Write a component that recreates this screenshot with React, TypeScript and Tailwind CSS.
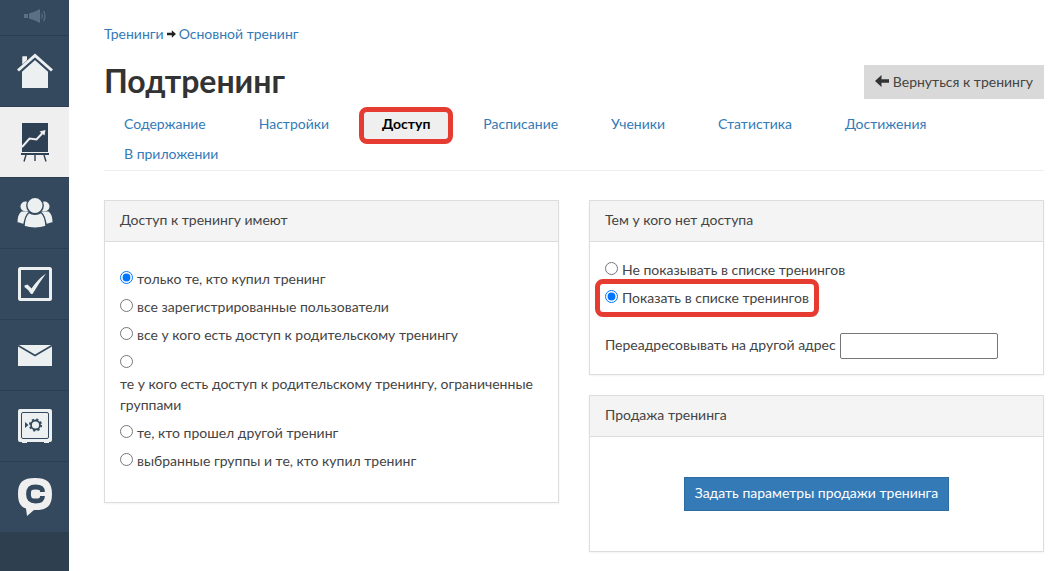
import type { ReactNode } from "react";

function MegaphoneIcon() {
  return (
    <svg width="22" height="16" viewBox="0 0 22 16" className="fill-[#5b7085]">
      <rect x="0" y="6" width="4" height="4" />
      <path d="M5 5.500 L11 3.500 L16 1 V15 L11 12.500 L5 10.500 Z" />
      <path d="M17.500 5.500 Q19 8 17.500 10.500 M19.500 3 Q22.500 8 19.500 13" className="fill-none stroke-[#5b7085]" strokeWidth="1.200" />
    </svg>
  );
}

function HomeIcon() {
  return (
    <svg width="36" height="36" viewBox="0 0 36 36" className="fill-[#ecf0f1]">
      <path d="M5.500 3.500 H10 V7 L5.500 11.500 Z" />
      <path d="M18 6 L31 18.500 V35 H5 V18.500 Z" />
      <path d="M1 18.500 L18 3.500 L35 18.500" className="fill-none stroke-[#34495e]" strokeWidth="5.600" />
      <path d="M5.500 3.500 H10 V7 L5.500 11.500 Z" />
      <path d="M1 17.500 L18 2.500 L35 17.500" className="fill-none stroke-[#ecf0f1]" strokeWidth="3" />
    </svg>
  );
}

function BoardIcon() {
  return (
    <svg width="28" height="40" viewBox="0 0 28 40">
      <path d="M1 1 H27 V30 H1 Z" className="fill-[#2e4154]" />
      <path d="M0 31 H28 V33 H0 Z" className="fill-[#2e4154]" />
      <path d="M5 33 L3 39.500 M14 33 V39 M23 33 L25 39.500" className="fill-none stroke-[#2e4154]" strokeWidth="1.400" />
      <path d="M1 25 L8.500 16.500 L15.500 17.500 L21.500 11" className="fill-none stroke-[#efefef]" strokeWidth="2" />
      <path d="M24.500 8 L23.500 13.500 L18.500 9.500 Z" className="fill-[#efefef]" />
    </svg>
  );
}

function UsersIcon() {
  return (
    <svg width="36" height="32" viewBox="0 0 36 32" className="fill-[#ecf0f1]">
      <circle cx="8.500" cy="9.500" r="5" />
      <circle cx="27.500" cy="9.500" r="5" />
      <path d="M0.500 26 Q0.500 17 4.500 14.500 H12 V27 Q6 27.500 0.500 25 Z M35.500 26 Q35.500 17 31.500 14.500 H24 V27 Q30 27.500 35.500 25 Z" />
      <path
        d="M12 15.500 Q14.500 17.300 18 17.300 Q21.500 17.300 24 15.500 Q28.500 19 29 29.500 Q18 33 7 29.500 Q7.500 19 12 15.500 Z"
        className="stroke-[#34495e]"
        strokeWidth="1.400"
      />
      <circle cx="18" cy="8.500" r="8.200" className="stroke-[#34495e]" strokeWidth="1.400" />
    </svg>
  );
}

function CheckIcon() {
  return (
    <svg width="34" height="34" viewBox="0 0 34 34">
      <rect x="1.500" y="1.500" width="31" height="31" rx="1" className="fill-none stroke-[#ecf0f1]" strokeWidth="3" />
      <path d="M6.500 18.500 L9.500 17.500 L13.500 21.500 Q20 12 28 6.500 Q21 16 14.500 27 H13 Q10.500 22.500 6.500 20 Z" className="fill-[#ecf0f1]" />
    </svg>
  );
}

function MailIcon() {
  return (
    <svg width="34" height="21" viewBox="0 0 34 21">
      <path d="M0 0 H34 V21 H0 Z" className="fill-[#ecf0f1]" />
      <path d="M0 0.500 L17 10.500 L34 0.500" className="fill-none stroke-[#34495e]" strokeWidth="1.700" />
    </svg>
  );
}

function SafeIcon() {
  return (
    <svg width="34" height="34" viewBox="0 0 34 34">
      <path d="M2 0 H32 Q34 0 34 2 V31 Q34 33 32 33 H31 V34 H26 V33 H9 V34 H4 V33 H2 Q0 33 0 31 V2 Q0 0 2 0 Z" className="fill-[#ecf0f1]" />
      <rect x="3.500" y="3.500" width="27" height="26" rx="1.500" className="fill-none stroke-[#34495e]" />
      <path d="M7 13 L10.500 16 L7 19 Z" className="fill-[#34495e]" />
      <circle cx="17.500" cy="16" r="4.500" className="fill-none stroke-[#34495e]" strokeWidth="1.800" />
      <circle cx="17.500" cy="16" r="5.700" className="fill-none stroke-[#34495e]" strokeWidth="1.800" strokeDasharray="2.200 2.277" />
    </svg>
  );
}

function ChatIcon() {
  return (
    <svg width="34" height="38" viewBox="0 0 34 38">
      <path d="M17 0 C29 0 34 4 34 16 C34 28 29 32 18 32 H16 L9 38 L8 30.500 C2.500 29 0 24 0 16 C0 4 5 0 17 0 Z" className="fill-[#efefef]" />
      <path d="M24.500 14 C24.500 9.500 21.500 9 17.500 9 C12 9 10.500 11 10.500 16 C10.500 21 12 23 17.500 23 C21.500 23 24.500 22.500 24.500 18" className="fill-none stroke-[#34495e]" strokeWidth="4.800" />
    </svg>
  );
}

function ArrowIcon({ className }: { className: string }) {
  return (
    <svg viewBox="0 0 14 12" className={className} fill="currentColor">
      <path d="M0 6 L6.500 0 V4.200 H14 V7.800 H6.500 V12 Z" />
    </svg>
  );
}

const menu: { label: string; icon: ReactNode; active?: boolean }[] = [
  { label: "Главная", icon: <HomeIcon /> },
  { label: "Тренинги", icon: <BoardIcon />, active: true },
  { label: "Пользователи", icon: <UsersIcon /> },
  { label: "Задачи", icon: <CheckIcon /> },
  { label: "Сообщения", icon: <MailIcon /> },
  { label: "Продажи", icon: <SafeIcon /> },
  { label: "Чат", icon: <ChatIcon /> },
];

const tabs = ["Содержание", "Настройки", "Доступ", "Расписание", "Ученики", "Статистика", "Достижения", "В приложении"];

const accessOptions = [
  "только те, кто купил тренинг",
  "все зарегистрированные пользователи",
  "все у кого есть доступ к родительскому тренингу",
  "те у кого есть доступ к родительскому тренингу, ограниченные группами",
  "те, кто прошел другой тренинг",
  "выбранные группы и те, кто купил тренинг",
];

function Panel({ title, children }: { title: string; children: ReactNode }) {
  return (
    <section className="border border-[#dddddd] bg-white shadow-xs">
      <h2 className="border-b border-[#dddddd] bg-[#f4f4f4] px-[15px] pt-[9px] pb-[11px] leading-5">{title}</h2>
      {children}
    </section>
  );
}

function RadioRow({ name, label, checked, stacked }: { name: string; label: string; checked?: boolean; stacked?: boolean }) {
  return (
    <label className={stacked ? "flex flex-col items-start" : "flex items-start gap-1"}>
      <span className="flex h-[21px] items-start pt-[3px]">
        <input type="radio" name={name} defaultChecked={checked} className="size-[13px] shrink-0" />
      </span>
      <span>{label}</span>
    </label>
  );
}

export default function App() {
  return (
    <div className="flex min-h-screen bg-white font-['Lato','Open_Sans',sans-serif] text-[14px] leading-[21px] text-[#444444]">
      <nav aria-label="Главное меню" className="w-[69px] shrink-0 bg-[#2e3f50]">
        <a href="#news" aria-label="Новости" className="flex h-9 items-center justify-center border-b border-[#2c3e50] bg-[#34495e] pb-[3px]">
          <MegaphoneIcon />
        </a>
        {menu.map((item) => (
          <a
            key={item.label}
            href="#menu"
            aria-label={item.label}
            className={
              item.active
                ? "flex h-[71px] items-center justify-center border-b border-[#2c3e50] bg-[#efefef]"
                : "flex h-[71px] items-center justify-center border-b border-[#2c3e50] bg-[#34495e]"
            }
          >
            {item.icon}
          </a>
        ))}
      </nav>

      <main className="min-w-0 flex-1 pt-[23px] pr-[17px] pl-[35px]">
        <nav aria-label="Навигация" className="flex items-center gap-[3px] text-[#337ab7]">
          <a href="#trainings">Тренинги</a>
          <ArrowIcon className="h-2 w-[9px] rotate-180 text-[#222222]" />
          <a href="#main">Основной тренинг</a>
        </nav>

        <header className="mt-[21px] flex items-start justify-between">
          <h1 className="text-[32px] leading-8 font-bold text-[#333333]">Подтренинг</h1>
          <a href="#back" className="flex h-[34px] items-center gap-1 bg-[#d9d9d9] px-[11px] pb-[2px]">
            <ArrowIcon className="h-3 w-[14px] text-[#333333]" />
            Вернуться к тренингу
          </a>
        </header>

        <nav aria-label="Разделы тренинга" className="mt-[10px] flex flex-wrap gap-x-[13px] border-b border-[#eeeeee] pb-px">
          {tabs.map((tab) =>
            tab === "Доступ" ? (
              <a key={tab} href="#access" aria-current="page" className="relative bg-[#efefef] px-5 py-[5px] leading-5 font-bold text-black">
                {tab}
                <span className="pointer-events-none absolute -inset-x-[3px] -top-[2px] -bottom-[5px] rounded-lg border-5 border-[#e53b30] bg-clip-padding" />
              </a>
            ) : (
              <a key={tab} href="#tab" className="px-5 py-[5px] leading-5 text-[#337ab7]">
                {tab}
              </a>
            ),
          )}
        </nav>

        <div className="mt-[29px] grid grid-cols-2 items-start gap-[30px]">
          <Panel title="Доступ к тренингу имеют">
            <form className="flex flex-col gap-[7px] px-[15px] pt-[26px] pb-[31px]">
              {accessOptions.map((option, index) => (
                <RadioRow key={option} name="access" label={option} checked={index === 0} stacked={index === 3} />
              ))}
            </form>
          </Panel>

          <div className="flex flex-col gap-5">
            <Panel title="Тем у кого нет доступа">
              <form className="px-[15px] pt-[17px] pb-[15px]">
                <div className="flex flex-col items-start gap-[7px]">
                  <RadioRow name="visibility" label="Не показывать в списке тренингов" />
                  <div className="relative">
                    <RadioRow name="visibility" label="Показать в списке тренингов" checked />
                    <span className="pointer-events-none absolute -inset-x-[10px] -top-[8px] -bottom-[9px] rounded-lg border-5 border-[#e53b30]" />
                  </div>
                </div>
                <div className="mt-[25px] flex items-center gap-1">
                  <label htmlFor="redirect" className="pb-[3px]">
                    Переадресовывать на другой адрес
                  </label>
                  <input id="redirect" type="text" className="h-[26px] w-[158px] rounded-xs border border-[#767676] bg-white px-1" />
                </div>
              </form>
            </Panel>

            <Panel title="Продажа тренинга">
              <div className="flex justify-center py-10">
                <button type="button" className="h-[34px] border border-[#2e6da4] bg-[#337ab7] px-[10px] pb-[3px] text-white">
                  Задать параметры продажи тренинга
                </button>
              </div>
            </Panel>
          </div>
        </div>
      </main>
    </div>
  );
}
